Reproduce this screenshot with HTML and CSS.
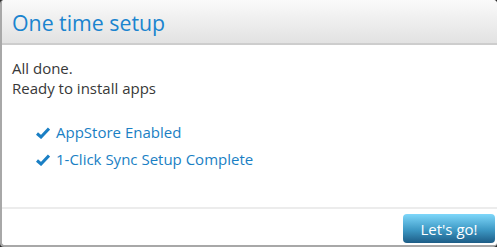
FILE: index.html
```
<!DOCTYPE html>
<html>
<head>
<meta charset="utf-8">
<link rel="stylesheet" href="styles.css">
</head>
<body>
<div class="dialog">
  <div class="header"><h1 class="title">One time setup</h1></div>
  <div class="body">
    <p class="msg">All done.<br>Ready to install apps</p>
    <ul class="checks">
      <li><svg class="tick" viewBox="0 0 14 12" width="14" height="12"><path d="M1 6.5 L5 10 L13 1.5" fill="none" stroke="#1a7fc4" stroke-width="3"/></svg>AppStore Enabled</li>
      <li><svg class="tick" viewBox="0 0 14 12" width="14" height="12"><path d="M1 6.5 L5 10 L13 1.5" fill="none" stroke="#1a7fc4" stroke-width="3"/></svg>1-Click Sync Setup Complete</li>
    </ul>
  </div>
  <div class="footer"><button class="go">Let's go!</button></div>
</div>
</body>
</html>
```
FILE: styles.css
```
html, body { margin: 0; padding: 0; background: #2a2a2a; }
body { width: 497px; height: 247px; overflow: hidden; font-family: "Open Sans", "DejaVu Sans", sans-serif; }
.dialog {
  width: 497px; height: 247px; box-sizing: border-box;
  background: #fff; border-left: 2px solid #a8a8a8; border-bottom: 2px solid #a8a8a8;
  border-radius: 4px; overflow: hidden;
  display: flex; flex-direction: column;
}
.header {
  height: 45px; box-sizing: border-box;
  background: linear-gradient(#fafafa, #e2e2e2);
  border-bottom: 2px solid #cdcdcd;
  padding: 8px 0 0 10px;
}
.title { margin: 0; font-weight: normal; font-size: 21.3px; line-height: 30px; color: #1a84cf; }
.body { flex: 1; padding: 13px 0 0 10px; }
.msg { margin: 0; font-size: 15px; line-height: 20px; color: #383838; }
.checks { list-style: none; margin: 21px 0 0 0; padding: 0 0 0 24px; }
.checks li { font-size: 15px; line-height: 27px; color: #1a7fc4; display: flex; align-items: center; }
.tick { margin-right: 6px; }
.footer {
  height: 38px; box-sizing: border-box; border-top: 2px solid #ececec;
  display: flex; justify-content: flex-end; align-items: flex-start; padding: 5px 2px 0 0;
}
.go {
  width: 92px; height: 29px; border: none; border-radius: 4px;
  background: linear-gradient(#7ed7fa, #3d98c4 55%, #1c5c86);
  color: #fff; font-family: "Open Sans", sans-serif; font-size: 15px; padding: 0;
}
```
